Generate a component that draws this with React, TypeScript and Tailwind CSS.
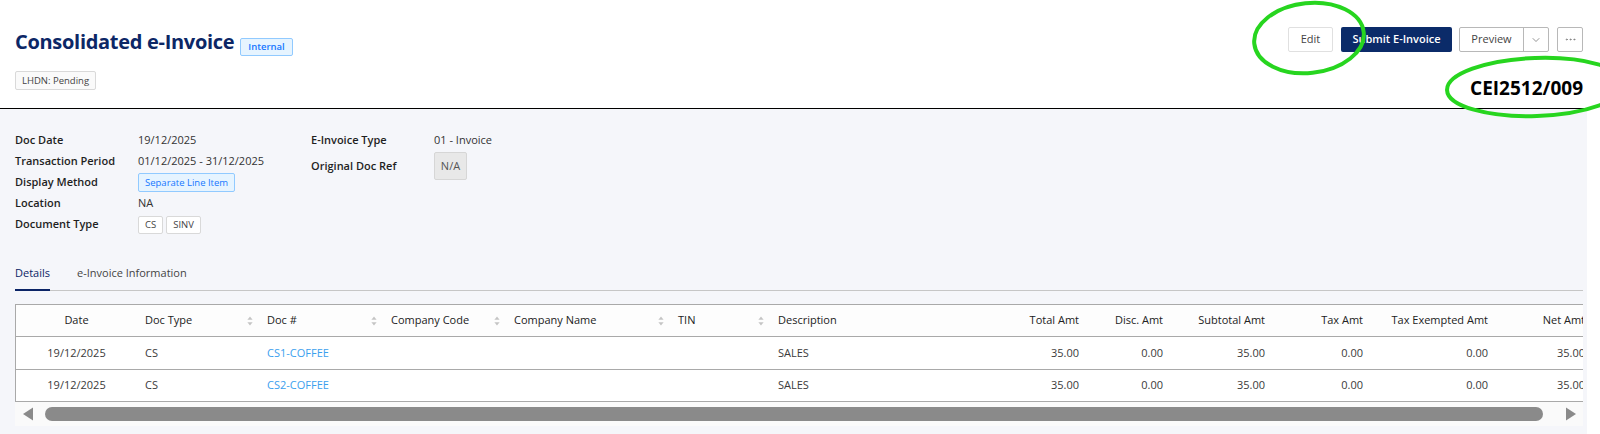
import { ChevronDown, Ellipsis } from 'lucide-react';

type Col = {
  key: string;
  label: string;
  width: string;
  align?: 'left' | 'right' | 'center';
  sortable?: boolean;
};

const columns: Col[] = [
  { key: 'date', label: 'Date', width: 'w-[121px]', align: 'center' },
  { key: 'docType', label: 'Doc Type', width: 'w-[122px]', sortable: true },
  { key: 'docNo', label: 'Doc #', width: 'w-[124px]', sortable: true },
  { key: 'coCode', label: 'Company Code', width: 'w-[123px]', sortable: true },
  { key: 'coName', label: 'Company Name', width: 'w-[164px]', sortable: true },
  { key: 'tin', label: 'TIN', width: 'w-[100px]', sortable: true },
  { key: 'desc', label: 'Description', width: 'w-[215px]' },
  { key: 'total', label: 'Total Amt', width: 'w-[102px]', align: 'right' },
  { key: 'disc', label: 'Disc. Amt', width: 'w-[84px]', align: 'right' },
  { key: 'subtotal', label: 'Subtotal Amt', width: 'w-[102px]', align: 'right' },
  { key: 'tax', label: 'Tax Amt', width: 'w-[98px]', align: 'right' },
  { key: 'taxEx', label: 'Tax Exempted Amt', width: 'w-[125px]', align: 'right' },
  { key: 'net', label: 'Net Amt', width: 'w-[97px]', align: 'right' },
  { key: 'round', label: 'Rounding', width: 'w-[97px]', align: 'right' },
];

const rows: Record<string, string>[] = [
  {
    date: '19/12/2025', docType: 'CS', docNo: 'CS1-COFFEE', coCode: '', coName: '', tin: '',
    desc: 'SALES', total: '35.00', disc: '0.00', subtotal: '35.00', tax: '0.00', taxEx: '0.00', net: '35.00', round: '0.00',
  },
  {
    date: '19/12/2025', docType: 'CS', docNo: 'CS2-COFFEE', coCode: '', coName: '', tin: '',
    desc: 'SALES', total: '35.00', disc: '0.00', subtotal: '35.00', tax: '0.00', taxEx: '0.00', net: '35.00', round: '0.00',
  },
];

function SortIcon() {
  return (
    <svg width="6" height="10" viewBox="0 0 6 10" className="shrink-0">
      <path d="M3 0.5 L5.6 3.8 L0.4 3.8 Z" fill="#c4c4c4" />
      <path d="M0.4 6.2 L5.6 6.2 L3 9.5 Z" fill="#c4c4c4" />
    </svg>
  );
}

function Tag({ children, className = '' }: { children: React.ReactNode; className?: string }) {
  return (
    <span
      className={`inline-flex items-center rounded-[2px] border px-[6px] text-[9.5px] leading-none ${className}`}
    >
      {children}
    </span>
  );
}

function InfoRow({ label, children }: { label: string; children: React.ReactNode }) {
  return (
    <div className="flex h-[21px] items-center">
      <div className="w-[123px] shrink-0 font-semibold text-[#1f1f1f]">{label}</div>
      <div className="flex items-center gap-[3px] text-[#333]">{children}</div>
    </div>
  );
}

export default function App() {
  return (
    <div className="relative h-[434px] w-[1600px] overflow-hidden bg-white font-['Open_Sans',sans-serif] text-[11px] text-[#333]">
      <div className="flex h-full w-[1587px] flex-col">
        {/* header */}
        <div className="flex h-[109px] shrink-0 justify-between border-b border-black pl-[15px] pr-[4px]">
          <div className="pt-[28px]">
            <div className="flex items-end gap-[6px]">
              <h1 className="text-[20px] font-bold leading-[28px] tracking-[-0.3px] text-[#0c2766]">
                Consolidated e-Invoice
              </h1>
              <Tag className="h-[18px] border-[#91caff] bg-[#e6f4ff] px-[7px] font-semibold text-[#1677ff]">
                Internal
              </Tag>
            </div>
            <Tag className="mt-[15px] h-[19px] border-[#d9d9d9] bg-[#fafafa] text-[#444]">LHDN: Pending</Tag>
          </div>

          <div className="flex flex-col items-end pt-[27px]">
            <div className="flex h-[25px] items-stretch">
              <button className="w-[45px] rounded-[2px] border border-[#e0e0e0] bg-white text-[11px] text-[#444]">
                Edit
              </button>
              <button className="ml-[8px] w-[111px] rounded-[2px] bg-[#0b2b69] text-[11px] font-semibold text-white">
                Submit E-Invoice
              </button>
              <div className="ml-[7px] flex w-[90px] rounded-[2px] border border-[#b8b8b8] bg-white">
                <button className="w-[64px] border-r border-[#b8b8b8] text-[11px] text-[#444]">Preview</button>
                <button className="flex flex-1 items-center justify-center text-[#666]">
                  <ChevronDown size={12} strokeWidth={1.4} />
                </button>
              </div>
              <button className="ml-[8px] flex w-[26px] items-center justify-center rounded-[2px] border border-[#b8b8b8] bg-white text-[#777]">
                <Ellipsis size={13} strokeWidth={1.4} />
              </button>
            </div>
            <div className="mt-[24px] text-[19px] font-bold leading-[24px] text-black">CEI2512/009</div>
          </div>
        </div>

        {/* body */}
        <div className="flex-1 bg-[#f5f6fa] pl-[15px] pr-[4px] pt-[21px]">
          <div className="flex">
            <div className="w-[296px]">
              <InfoRow label="Doc Date">19/12/2025</InfoRow>
              <InfoRow label="Transaction Period">01/12/2025 - 31/12/2025</InfoRow>
              <InfoRow label="Display Method">
                <Tag className="h-[19px] border-[#91caff] bg-[#e6f4ff] text-[#1677ff]">Separate Line Item</Tag>
              </InfoRow>
              <InfoRow label="Location">NA</InfoRow>
              <InfoRow label="Document Type">
                <Tag className="h-[18px] border-[#d9d9d9] bg-white text-[#444]">CS</Tag>
                <Tag className="h-[18px] border-[#d9d9d9] bg-white text-[#444]">SINV</Tag>
              </InfoRow>
            </div>
            <div>
              <InfoRow label="E-Invoice Type">01 - Invoice</InfoRow>
              <div className="mt-[1px] flex h-[28px] items-center">
                <div className="w-[123px] shrink-0 font-semibold text-[#1f1f1f]">Original Doc Ref</div>
                <div className="flex h-[28px] w-[33px] items-center justify-center rounded-[2px] border border-[#d6d6d6] bg-[#e8e8e8] text-[#555]">
                  N/A
                </div>
              </div>
            </div>
          </div>

          {/* tabs */}
          <div className="mt-[21px] flex gap-[27px] border-b border-[#c6c6c6]">
            <div className="relative flex h-[34px] items-center text-[#0b2466]">
              Details
              <span className="absolute bottom-[-1px] left-0 right-0 h-[2px] bg-[#0b2466]" />
            </div>
            <div className="flex h-[34px] items-center text-[#444]">e-Invoice Information</div>
          </div>

          {/* table */}
          <div className="mt-[13px] w-[1568px] overflow-hidden">
            <div className="border-l border-t border-[#a9a9a9] bg-white">
              <div className="flex h-[32px] border-b border-[#a9a9a9] bg-[#fdfdfd] font-medium text-[#222]">
                {columns.map((c) => (
                  <div
                    key={c.key}
                    className={`flex shrink-0 items-center ${c.width} ${
                      c.align === 'center'
                        ? 'justify-center px-[8px]'
                        : c.align === 'right'
                          ? 'justify-end px-[8px]'
                          : 'justify-between pl-[8px] pr-[6px]'
                    }`}
                  >
                    <span className="whitespace-nowrap">{c.label}</span>
                    {c.sortable && <SortIcon />}
                  </div>
                ))}
              </div>
              {rows.map((r, i) => (
                <div
                  key={i}
                  className={`flex border-b border-[#a9a9a9] ${i === 0 ? 'h-[33px]' : 'h-[32px]'}`}
                >
                  {columns.map((c) => (
                    <div
                      key={c.key}
                      className={`flex shrink-0 items-center px-[8px] ${c.width} ${
                        c.align === 'center' ? 'justify-center' : c.align === 'right' ? 'justify-end' : ''
                      } ${c.key === 'docNo' ? 'text-[#3ba0ee]' : 'text-[#3a3a3a]'}`}
                    >
                      <span className="whitespace-nowrap">{r[c.key]}</span>
                    </div>
                  ))}
                </div>
              ))}
            </div>

            {/* horizontal scrollbar */}
            <div className="flex h-[24px] items-center bg-[#fafafa]">
              <svg width="12" height="14" viewBox="0 0 12 14" className="ml-[7px] shrink-0">
                <path d="M11 0.5 L11 13.5 L1 7 Z" fill="#8a8a8a" />
              </svg>
              <div className="ml-[11px] h-[14px] w-[1498px] rounded-full bg-[#8a8a8a]" />
              <svg width="12" height="14" viewBox="0 0 12 14" className="ml-[22px] shrink-0">
                <path d="M1 0.5 L1 13.5 L11 7 Z" fill="#8a8a8a" />
              </svg>
            </div>
          </div>
        </div>
      </div>

      {/* annotation marks */}
      <svg className="pointer-events-none absolute left-0 top-0" width="1600" height="434" viewBox="0 0 1600 434">
        <ellipse cx="1309" cy="38" rx="55" ry="35" fill="none" stroke="#27d51f" strokeWidth="4" transform="rotate(-6 1309 38)" />
        <ellipse cx="1536" cy="87" rx="89" ry="29" fill="none" stroke="#27d51f" strokeWidth="4" transform="rotate(-2 1536 87)" />
      </svg>
    </div>
  );
}
